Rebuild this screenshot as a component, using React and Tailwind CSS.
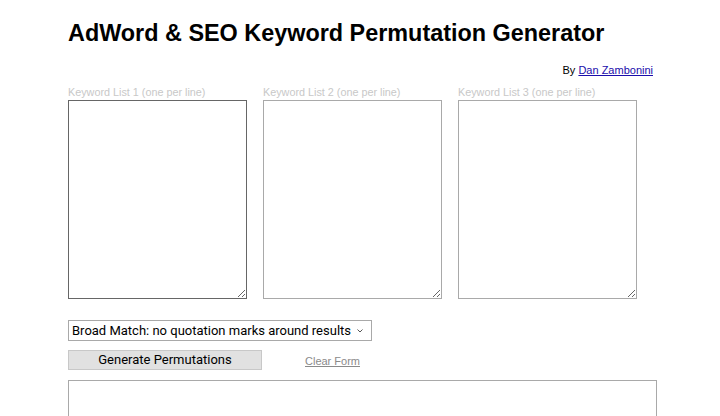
import React, { useState } from "react";

const lists = ["Keyword List 1 (one per line)", "Keyword List 2 (one per line)", "Keyword List 3 (one per line)"];

export default function App() {
  const [match, setMatch] = useState("broad");
  const [values, setValues] = useState(["", "", ""]);
  const [output, setOutput] = useState("");

  return (
    <div className="h-[416px] overflow-hidden bg-white font-['Liberation_Sans',Arial,sans-serif] text-black">
      <div className="w-[589px] ml-[68px] pt-[18px]">
        <h1 className="text-[23.4px] leading-[30px] font-bold">AdWord &amp; SEO Keyword Permutation Generator</h1>

        <p className="mt-[15px] pr-[4px] text-right text-[11px] leading-[14px]">
          By <a href="#" className="text-[#1a0dab] underline">Dan Zambonini</a>
        </p>

        {/* keyword lists */}
        <div className="mt-[8px] flex gap-[16px]">
          {lists.map((label, i) => (
            <div key={i} className="flex flex-col">
              <label className="text-[10.8px] leading-[14px] text-[#c8c8c8]">{label}</label>
              <textarea
                value={values[i]}
                onChange={e => setValues(values.map((v, j) => (j === i ? e.target.value : v)))}
                className={`mt-[1px] w-[179px] h-[199px] border bg-white ${i === 0 ? "border-[#666]" : "border-[#a9a9a9]"}`}
              />
            </div>
          ))}
        </div>

        {/* match type */}
        <div className="mt-[21px] flex w-[304px] h-[21px] items-center border border-[#a9a9a9] font-['Roboto',sans-serif] text-[13px]">
          <select
            value={match}
            onChange={e => setMatch(e.target.value)}
            className="min-w-0 flex-1 appearance-none bg-transparent pl-[3px] leading-[19px] outline-none"
          >
            <option value="broad">Broad Match: no quotation marks around results</option>
            <option value="phrase">Phrase Match: quotation marks around results</option>
            <option value="exact">Exact Match: square brackets around results</option>
          </select>
          <svg width="10" height="10" viewBox="0 0 10 10" className="mr-[6px] text-[#555]">
            <path d="M2.5 3.5 L5 6 L7.5 3.5" fill="none" stroke="currentColor" strokeWidth="1" />
          </svg>
        </div>

        <div className="mt-[9px] flex items-center">
          <button className="w-[194px] h-[20px] border border-[#c8c8c8] bg-[#e1e1e1] font-['Roboto',sans-serif] text-[13px] leading-[18px]">
            Generate Permutations
          </button>
          <a href="#" onClick={e => { e.preventDefault(); setValues(["", "", ""]); setOutput(""); }}
            className="ml-[43px] mt-[3px] text-[11px] text-[#8a8a8a] underline">Clear Form</a>
        </div>

        <textarea
          value={output}
          onChange={e => setOutput(e.target.value)}
          className="mt-[10px] block w-[589px] h-[120px] border border-[#a9a9a9] bg-white"
        />
      </div>
    </div>
  );
}
